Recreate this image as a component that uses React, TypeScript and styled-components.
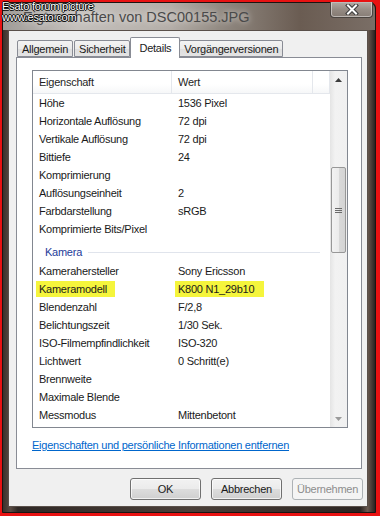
import React from 'react';
import styled, { createGlobalStyle } from 'styled-components';

const GlobalStyle = createGlobalStyle`
    html, body {
        margin: 0;
        padding: 0;
        background: #e81212;
    }
    * {
        box-sizing: border-box;
    }
`;

const UI_FONT = `"Liberation Sans", "Noto Sans", sans-serif`;

const Shot = styled.div`
    width: 380px;
    height: 516px;
    background: #e81212;
    padding: 2px 4px 3px 2px;
    position: relative;
    font-family: ${UI_FONT};
    font-size: 11px;
    letter-spacing: -0.25px;
`;

const Window = styled.div`
    height: 100%;
    display: flex;
    flex-direction: column;
    background: linear-gradient(90deg, #3b302b 0%, #5a4c44 2%, #2f2825 4%, #4a3f39 50%, #2b2421 96%, #6a5a50 98%, #2a2220 100%);
    border: 1px solid #1a1412;
    border-radius: 6px 6px 0 0;
`;

const TitleBar = styled.div`
    height: 27px;
    flex: none;
    display: flex;
    align-items: flex-start;
    justify-content: space-between;
    padding: 0 2px 0 20px;
    background: linear-gradient(90deg, #a09c98 0%, #c4c0bc 20%, #b4aea8 45%, #8e867e 60%, #6a5c52 80%, #7a6e66 100%);
    border-radius: 6px 6px 0 0;
`;

const Title = styled.span`
    margin-top: 6px;
    font-size: 14.5px;
    letter-spacing: 0;
    color: #4a4a4a;
    text-shadow: 0 0 6px rgba(255, 255, 255, 0.8);
    white-space: nowrap;
`;

const CloseButton = styled.div`
    width: 43px;
    height: 16px;
    margin-top: -1px;
    border: 1px solid #4a4440;
    border-top: none;
    border-radius: 0 0 4px 4px;
    background: linear-gradient(180deg, rgba(230, 226, 222, 0.55) 0%, rgba(190, 184, 178, 0.45) 50%, rgba(150, 142, 136, 0.5) 100%);
    box-shadow: inset 0 0 0 1px rgba(255, 255, 255, 0.45);
    display: flex;
    align-items: center;
    justify-content: center;
`;

const Watermark = styled.div`
    position: absolute;
    left: 2px;
    top: 1px;
    font-family: "Liberation Sans", sans-serif;
    font-size: 11px;
    line-height: 11px;
    color: #ffffff;
    text-shadow: 1px 0 0 #000, -1px 0 0 #000, 0 1px 0 #000, 0 -1px 0 #000;
    letter-spacing: -0.2px;
`;

const Client = styled.div`
    flex: 1;
    margin: 0 7px 5px 5px;
    background: #f0f0f0;
    border: 1px solid #5a504a;
    display: flex;
    flex-direction: column;
    padding: 6px 5px 0 7px;
`;

const TabStrip = styled.div`
    height: 20px;
    display: flex;
    align-items: flex-end;
    padding-left: 1px;
    position: relative;
    z-index: 1;
`;

const Tab = styled.div<{ $active?: boolean }>`
    height: ${({ $active }) => ($active ? '21px' : '17px')};
    margin: ${({ $active }) => ($active ? '0 -1px -1px -1px' : '0 1px 0 0')};
    padding: ${({ $active }) => ($active ? '0 8px' : '0 4px')};
    border: 1px solid #898c95;
    border-bottom: ${({ $active }) => ($active ? 'none' : '1px solid #898c95')};
    border-radius: 2px 2px 0 0;
    background: ${({ $active }) =>
        $active ? '#ffffff' : 'linear-gradient(180deg, #f3f3f3 0%, #ebebeb 50%, #dedede 51%, #e4e4e4 100%)'};
    color: #1a1a1a;
    display: flex;
    align-items: center;
    white-space: nowrap;
    position: relative;
`;

const Panel = styled.div`
    height: 412px;
    background: #ffffff;
    border: 1px solid #898c95;
    padding: 12px 13px 0 15px;
    display: flex;
    flex-direction: column;
`;

const ListBox = styled.div`
    height: 358px;
    border: 1px solid #828790;
    display: flex;
    background: #ffffff;
`;

const ListBody = styled.div`
    flex: 1;
    overflow: hidden;
    display: flex;
    flex-direction: column;
`;

const HeaderRow = styled.div`
    height: 23px;
    flex: none;
    display: flex;
    border-bottom: 1px solid #e4e7ec;
    background: linear-gradient(180deg, #ffffff 0%, #ffffff 60%, #f6f7f8 100%);
`;

const HeaderCell = styled.div<{ $w?: number }>`
    width: ${({ $w }) => ($w ? `${$w}px` : 'auto')};
    flex: ${({ $w }) => ($w ? 'none' : '1')};
    border-right: 1px solid #e4e7ec;
    padding-left: 6px;
    color: #1e1e1e;
    display: flex;
    align-items: center;
`;

const Row = styled.div`
    height: 18px;
    flex: none;
    display: flex;
    align-items: center;
    color: #1a1a1a;
    white-space: nowrap;
`;

const Cell = styled.div<{ $w: number }>`
    width: ${({ $w }) => $w}px;
    flex: none;
    padding-left: 6px;
    overflow: visible;
`;

const Marked = styled.span<{ $padRight: number }>`
    background: #f5f53c;
    margin-left: -3px;
    padding: 2px ${({ $padRight }) => $padRight}px 2px 3px;
`;

const GroupRow = styled.div`
    height: 24px;
    flex: none;
    display: flex;
    align-items: center;
    padding: 4px 0 0 12px;
    gap: 6px;
`;

const GroupLabel = styled.span`
    color: #1e3c9a;
`;

const GroupLine = styled.div`
    flex: 1;
    height: 1px;
    margin-right: 10px;
    background: #e0e4ec;
`;

const ScrollBar = styled.div`
    width: 17px;
    flex: none;
    display: flex;
    flex-direction: column;
    background: linear-gradient(90deg, #e4e4e4 0%, #f2f2f2 30%, #f0f0f0 100%);
`;

const ScrollArrow = styled.div`
    height: 17px;
    flex: none;
    display: flex;
    align-items: center;
    justify-content: center;
`;

const ScrollTrack = styled.div`
    flex: 1;
    display: flex;
    flex-direction: column;
    padding-top: 79px;
`;

const Thumb = styled.div`
    height: 86px;
    margin: 0 1px;
    border: 1px solid #979797;
    border-radius: 2px;
    background: linear-gradient(90deg, #f2f2f2 0%, #ebebeb 50%, #d9d9d9 51%, #d4d4d4 100%);
    display: flex;
    align-items: center;
    justify-content: center;
`;

const Link = styled.a`
    margin-top: 11px;
    color: #0066cc;
    text-decoration: underline;
    white-space: nowrap;
`;

const ButtonRow = styled.div`
    display: flex;
    justify-content: flex-end;
    gap: 10px;
    padding: 9px 0 0 0;
    margin-right: -1px;
`;

const Button = styled.div<{ $disabled?: boolean }>`
    width: 71px;
    height: 22px;
    border: 1px solid ${({ $disabled }) => ($disabled ? '#adb2b5' : '#707070')};
    border-radius: 3px;
    background: ${({ $disabled }) =>
        $disabled ? '#f4f4f4' : 'linear-gradient(180deg, #f2f2f2 0%, #ebebeb 49%, #dddddd 50%, #cfcfcf 100%)'};
    box-shadow: inset 0 0 0 1px ${({ $disabled }) => ($disabled ? '#f4f4f4' : 'rgba(255,255,255,0.7)')};
    color: ${({ $disabled }) => ($disabled ? '#8d8d8d' : '#1a1a1a')};
    display: flex;
    align-items: center;
    justify-content: center;
`;

const NAME_W = 139;
const VALUE_W = 141;

const photoRows: [string, string][] = [
    ['Höhe', '1536 Pixel'],
    ['Horizontale Auflösung', '72 dpi'],
    ['Vertikale Auflösung', '72 dpi'],
    ['Bittiefe', '24'],
    ['Komprimierung', ''],
    ['Auflösungseinheit', '2'],
    ['Farbdarstellung', 'sRGB'],
    ['Komprimierte Bits/Pixel', ''],
];

const cameraRows: [string, string, boolean?][] = [
    ['Kamerahersteller', 'Sony Ericsson'],
    ['Kameramodell', 'K800 N1_29b10', true],
    ['Blendenzahl', 'F/2,8'],
    ['Belichtungszeit', '1/30 Sek.'],
    ['ISO-Filmempfindlichkeit', 'ISO-320'],
    ['Lichtwert', '0 Schritt(e)'],
    ['Brennweite', ''],
    ['Maximale Blende', ''],
    ['Messmodus', 'Mittenbetont'],
];

const App: React.FC = () => {
    return (
        <>
            <GlobalStyle />
            <Shot>
                <Window>
                    <TitleBar>
                        <Title>Eigenschaften von DSC00155.JPG</Title>
                        <CloseButton>
                            <svg width="14" height="11" viewBox="0 0 14 11">
                                <path d="M3 1.5 L11 9.5 M11 1.5 L3 9.5" stroke="#3a3a3a" strokeWidth="4" strokeLinecap="square" />
                                <path d="M3 1.5 L11 9.5 M11 1.5 L3 9.5" stroke="#ffffff" strokeWidth="2" strokeLinecap="square" />
                            </svg>
                        </CloseButton>
                    </TitleBar>
                    <Client>
                        <TabStrip>
                            <Tab>Allgemein</Tab>
                            <Tab>Sicherheit</Tab>
                            <Tab $active>Details</Tab>
                            <Tab>Vorgängerversionen</Tab>
                        </TabStrip>
                        <Panel>
                            <ListBox>
                                <ListBody>
                                    <HeaderRow>
                                        <HeaderCell $w={NAME_W}>Eigenschaft</HeaderCell>
                                        <HeaderCell $w={VALUE_W}>Wert</HeaderCell>
                                        <HeaderCell />
                                    </HeaderRow>
                                    {photoRows.map(([name, value]) => (
                                        <Row key={name}>
                                            <Cell $w={NAME_W}>{name}</Cell>
                                            <Cell $w={VALUE_W}>{value}</Cell>
                                        </Row>
                                    ))}
                                    <GroupRow>
                                        <GroupLabel>Kamera</GroupLabel>
                                        <GroupLine />
                                    </GroupRow>
                                    {cameraRows.map(([name, value, marked]) => (
                                        <Row key={name}>
                                            <Cell $w={NAME_W}>
                                                {marked ? <Marked $padRight={8}>{name}</Marked> : name}
                                            </Cell>
                                            <Cell $w={VALUE_W}>
                                                {marked ? <Marked $padRight={10}>{value}</Marked> : value}
                                            </Cell>
                                        </Row>
                                    ))}
                                </ListBody>
                                <ScrollBar>
                                    <ScrollArrow>
                                        <svg width="7" height="4" viewBox="0 0 7 4">
                                            <path d="M0 4 L3.5 0 L7 4 Z" fill="#3c3c3c" />
                                        </svg>
                                    </ScrollArrow>
                                    <ScrollTrack>
                                        <Thumb>
                                            <svg width="7" height="7" viewBox="0 0 7 7">
                                                <path d="M0 1.5 H7 M0 3.5 H7 M0 5.5 H7" stroke="#6a6a6a" strokeWidth="1" />
                                            </svg>
                                        </Thumb>
                                    </ScrollTrack>
                                    <ScrollArrow>
                                        <svg width="7" height="4" viewBox="0 0 7 4">
                                            <path d="M0 0 L3.5 4 L7 0 Z" fill="#9a9a9a" />
                                        </svg>
                                    </ScrollArrow>
                                </ScrollBar>
                            </ListBox>
                            <Link>Eigenschaften und persönliche Informationen entfernen</Link>
                        </Panel>
                        <ButtonRow>
                            <Button>OK</Button>
                            <Button>Abbrechen</Button>
                            <Button $disabled>Übernehmen</Button>
                        </ButtonRow>
                    </Client>
                </Window>
                <Watermark>
                    Esato forum picture
                    <br />
                    www.esato.com
                </Watermark>
            </Shot>
        </>
    );
};

export default App;
